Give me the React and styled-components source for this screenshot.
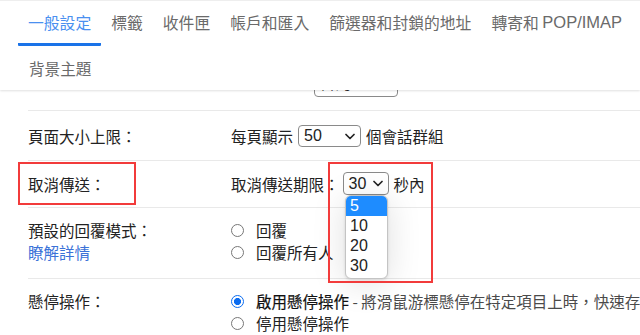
import React from "react";
import styled, { createGlobalStyle } from "styled-components";

const GlobalStyle = createGlobalStyle`
  html, body {
    margin: 0;
    padding: 0;
    background: #fff;
    overflow: hidden;
  }
  body {
    font-family: "Noto Sans CJK TC", "Noto Sans", "Liberation Sans", sans-serif;
    color: #222;
  }
`;

const Page = styled.div`
  position: relative;
  width: 640px;
  height: 335px;
  display: flex;
  flex-direction: column;
  overflow: hidden;
`;

const Header = styled.header`
  position: relative;
  z-index: 2;
  height: 90px;
  flex: none;
  background: #fff;
  box-shadow: 0 1px 2px rgba(0, 0, 0, 0.12);
  border-top: 1px solid #eee;
  box-sizing: border-box;
`;

const TabRow = styled.nav`
  display: flex;
  height: 45px;
  padding-left: 18px;
`;

const Tab = styled.div`
  display: flex;
  align-items: center;
  padding: 0 10px;
  font-size: 15.8px;
  white-space: nowrap;
  color: ${(p) => (p.$active ? "#4a90f0" : "#6a6a6a")};
  border-bottom: 3px solid ${(p) => (p.$active ? "#1a73e8" : "transparent")};
  border-radius: 1px;
`;

const Latin = styled.span`
  font-family: "Liberation Sans", sans-serif;
  font-size: 16.5px;
`;

const SubRow = styled.div`
  display: flex;
  align-items: center;
  height: 44px;
  padding-left: 29px;
  font-size: 15.6px;
  color: #6a6a6a;
`;

const Viewport = styled.div`
  flex: 1;
  overflow: hidden;
`;

// the list is scrolled a little: its first row sits under the header
const List = styled.div`
  margin-top: -31px;
`;

const Row = styled.div`
  display: grid;
  grid-template-columns: 203px 1fr;
  margin-left: 28px;
  padding: ${(p) => p.$pad || "11px 0 12px"};
  border-top: ${(p) => (p.$first ? "none" : "1px solid #e9e9e9")};
  font-size: 15.5px;
`;

const Label = styled.div`
  display: flex;
  flex-direction: column;
  line-height: 22px;
  white-space: nowrap;
`;

const Link = styled.span`
  color: #3b72d8;
`;

const Value = styled.div`
  display: flex;
  flex-direction: column;
  min-width: 0;
`;

const Line = styled.div`
  display: flex;
  align-items: ${(p) => p.$align || "center"};
  gap: ${(p) => p.$gap || "5px"};
  height: ${(p) => p.$h || "22px"};
  line-height: ${(p) => p.$lh || "normal"};
  white-space: nowrap;
  overflow: hidden;
`;

const SelectBox = styled.div`
  display: inline-flex;
  align-items: center;
  justify-content: space-between;
  box-sizing: border-box;
  width: ${(p) => p.$w}px;
  height: ${(p) => p.$h || 22}px;
  padding: 0 5px 0 5px;
  border: 1px solid #8a8a8a;
  border-radius: 4px;
  background: #fff;
  font-family: "Liberation Sans", "Noto Sans CJK TC", sans-serif;
  font-size: 16px;
  color: #222;
`;

const Chevron = () => (
  <svg width="10" height="7" viewBox="0 0 10 7">
    <path d="M1 1.5 L5 5.5 L9 1.5" fill="none" stroke="#222" strokeWidth="1.7" strokeLinecap="round" strokeLinejoin="round" />
  </svg>
);

const Select = ({ value, w, h }) => (
  <SelectBox $w={w} $h={h}>
    <span>{value}</span>
    <Chevron />
  </SelectBox>
);

const Radio = styled.span`
  flex: none;
  width: 13px;
  height: 13px;
  box-sizing: border-box;
  border-radius: 50%;
  border: 1px solid ${(p) => (p.$checked ? "#0b6cf0" : "#777")};
  background: ${(p) =>
    p.$checked ? "radial-gradient(circle, #0b6cf0 0 3.3px, #fff 3.8px)" : "#fff"};
  ${(p) => p.$checked && "border-width: 1.6px;"}
`;

const Strong = styled.span`
  color: #111;
  -webkit-text-stroke: 0.2px #111;
`;

const Hint = styled.span`
  color: #4a4a4a;
`;

const Mark = styled.div`
  position: absolute;
  z-index: 4;
  left: ${(p) => p.$x}px;
  top: ${(p) => p.$y}px;
  width: ${(p) => p.$w}px;
  height: ${(p) => p.$h}px;
  box-sizing: border-box;
  border: 2px solid #f23b3b;
  pointer-events: none;
`;

const Dropdown = styled.ul`
  position: absolute;
  z-index: 3;
  left: 345px;
  top: 195px;
  width: 43px;
  margin: 0;
  padding: 0 0 2px;
  list-style: none;
  box-sizing: border-box;
  background: #fff;
  border: 1px solid #c4c4c4;
  border-radius: 6px;
  overflow: hidden;
  box-shadow: 0 4px 34px rgba(0, 0, 0, 0.13), 0 1px 3px rgba(0, 0, 0, 0.12);
  font-family: "Liberation Sans", sans-serif;
  font-size: 16px;
`;

const Option = styled.li`
  height: 20px;
  line-height: 20px;
  padding-left: 4px;
  background: ${(p) => (p.$selected ? "#1e8cff" : "transparent")};
  color: ${(p) => (p.$selected ? "#fff" : "#222")};
`;

const tabs = ["一般設定", "標籤", "收件匣", "帳戶和匯入", "篩選器和封鎖的地址"];

export default function App() {
  return (
    <Page>
      <GlobalStyle />
      <Header>
        <TabRow>
          {tabs.map((t, i) => (
            <Tab key={t} $active={i === 0}>
              {t}
            </Tab>
          ))}
          <Tab>
            轉寄和&nbsp;<Latin>POP/IMAP</Latin>
          </Tab>
          <Tab>外掛程式</Tab>
        </TabRow>
        <SubRow>背景主題</SubRow>
      </Header>

      <Viewport>
        <List>
          <Row $first $pad="10px 0 13px">
            <Label />
            <Value>
              <Line $align="flex-start" $lh="23px" $h="28px">
                預設國碼：
                <Select value="台灣" w={84} h={28} />
              </Line>
            </Value>
          </Row>

          <Row $pad="14px 0 13px">
            <Label>頁面大小上限：</Label>
            <Value>
              <Line>
                每頁顯示
                <Select value="50" w={63} />
                個會話群組
              </Line>
            </Value>
          </Row>

          <Row $pad="11px 0 12px">
            <Label>
              <Line $h="23px">取消傳送：</Line>
            </Label>
            <Value>
              <Line $h="23px" $gap="3px">
                取消傳送期限：
                <Select value="30" w={46} h={23} />
                <span style={{ marginLeft: 2 }}>秒內</span>
              </Line>
            </Value>
          </Row>

          <Row $pad="11px 0 15px">
            <Label>
              預設的回覆模式：
              <Link>瞭解詳情</Link>
            </Label>
            <Value>
              <Line $gap="12px">
                <Radio />
                回覆
              </Line>
              <Line $gap="12px">
                <Radio />
                回覆所有人
              </Line>
            </Value>
          </Row>

          <Row $pad="11px 0 12px">
            <Label>懸停操作：</Label>
            <Value>
              <Line $gap="12px">
                <Radio $checked />
                <span>
                  <Strong>啟用懸停操作</Strong>
                  <Hint> - 將滑鼠游標懸停在特定項目上時，快速存取封存、刪除等控制項。</Hint>
                </span>
              </Line>
              <Line $gap="12px">
                <Radio />
                停用懸停操作
              </Line>
            </Value>
          </Row>
        </List>
      </Viewport>

      <Dropdown>
        <Option $selected>5</Option>
        <Option>10</Option>
        <Option>20</Option>
        <Option>30</Option>
      </Dropdown>

      <Mark $x={18} $y={162} $w={118} $h={43} />
      <Mark $x={328} $y={162} $w={105} $h={121} />
    </Page>
  );
}
